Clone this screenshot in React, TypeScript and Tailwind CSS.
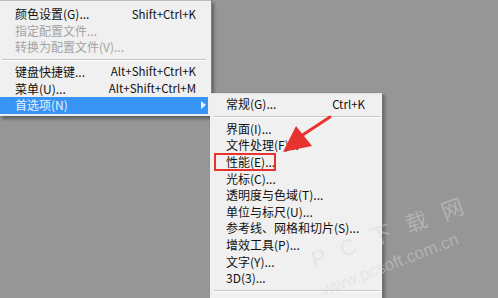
import React from 'react';

interface MenuItem {
  label: string;
  shortcut?: string;
  disabled?: boolean;
  active?: boolean;
  arrow?: boolean;
  sep?: boolean;
}

const font = { fontFamily: '"Noto Sans CJK SC", "Noto Sans", sans-serif' };

const mainItems: MenuItem[] = [
  { label: '颜色设置(G)...', shortcut: 'Shift+Ctrl+K' },
  { label: '指定配置文件...', disabled: true },
  { label: '转换为配置文件(V)...', disabled: true },
  { label: '', sep: true },
  { label: '键盘快捷键...', shortcut: 'Alt+Shift+Ctrl+K' },
  { label: '菜单(U)...', shortcut: 'Alt+Shift+Ctrl+M' },
  { label: '首选项(N)', active: true, arrow: true },
];

const subItems: MenuItem[] = [
  { label: '常规(G)...', shortcut: 'Ctrl+K' },
  { label: '', sep: true },
  { label: '界面(I)...' },
  { label: '文件处理(F)...' },
  { label: '性能(E)...' },
  { label: '光标(C)...' },
  { label: '透明度与色域(T)...' },
  { label: '单位与标尺(U)...' },
  { label: '参考线、网格和切片(S)...' },
  { label: '增效工具(P)...' },
  { label: '文字(Y)...' },
  { label: '3D(3)...' },
  { label: '', sep: true },
  { label: 'Camera Raw(M)...' },
];

const Row: React.FC<{ item: MenuItem; pl: string; pr: string }> = ({ item, pl, pr }) => {
  if (item.sep) {
    return (
      <div className="h-[8px] flex flex-col justify-center">
        <div className="h-px bg-[#c4c4c4] mx-[2px]" />
        <div className="h-px bg-white mx-[2px]" />
      </div>
    );
  }
  return (
    <div
      className={`h-[16.6px] flex items-center justify-between ${pl} ${pr} text-[12px] leading-none ${
        item.active ? 'bg-[#3794f5] text-[#e8f2ff]' : item.disabled ? 'text-[#a3a3a3]' : 'text-[#111]'
      }`}
    >
      <span>{item.label}</span>
      {item.shortcut && <span className="text-[11.5px]">{item.shortcut}</span>}
      {item.arrow && (
        <svg width="5" height="8" viewBox="0 0 5 8" className="mr-[-10px]">
          <path d="M0 0 L5 4 L0 8 Z" fill="#e8f2ff" />
        </svg>
      )}
    </div>
  );
};

const App: React.FC = () => {
  return (
    <div className="relative w-[498px] h-[298px] overflow-hidden bg-[#969696]" style={font}>
      {/* main menu */}
      <div className="absolute left-0 top-0 w-[212px] bg-[#f0f0f0] border-r border-[#7d7d7d] border-b border-b-[#e8e8e8] shadow-[2px_3px_3px_rgba(0,0,0,0.35)]">
        <div className="h-[1px] bg-[#bdbdbd]" />
        <div className="pt-[5px] pb-[1px] pr-[3px]">
          {mainItems.map((item, i) => (
            <Row key={i} item={item} pl="pl-[15px]" pr="pr-[12px]" />
          ))}
        </div>
      </div>

      {/* submenu */}
      <div className="absolute left-[210px] top-[93px] w-[173px] h-[220px] bg-[#f0f0f0] border-t border-[#e0e0e0] border-r border-r-[#6f6f6f] shadow-[2px_2px_3px_rgba(0,0,0,0.3)]">
        <div className="pt-[2px] pl-[2px]">
          {subItems.map((item, i) => (
            <Row key={i} item={item} pl="pl-[14px]" pr="pr-[17px]" />
          ))}
        </div>
      </div>

      {/* red highlight box */}
      <div className="absolute left-[214px] top-[153px] w-[62px] h-[18px] border-2 border-[#e8322f]" />

      {/* red arrow */}
      <svg className="absolute left-0 top-0 pointer-events-none" width="498" height="298" viewBox="0 0 498 298">
        <path d="M330 117 L298 138" stroke="#e8322f" strokeWidth="3" strokeLinecap="round" />
        <path d="M296 126 L283 152 L312 146 Z" fill="#e8322f" />
      </svg>

      {/* watermark */}
      <div
        className="absolute left-[312px] top-[250px] origin-left -rotate-[20deg] text-[22px] leading-none tracking-[5px] text-[#d8d8d8]/45 whitespace-nowrap pointer-events-none"
        style={{ fontFamily: '"Liberation Sans", "Noto Sans CJK SC", sans-serif' }}
      >
        P C 下 载 网
      </div>
      <div
        className="absolute left-[322px] top-[282px] origin-left -rotate-[21deg] text-[17px] leading-none text-[#d8d8d8]/45 whitespace-nowrap pointer-events-none"
        style={{ fontFamily: '"Liberation Sans", sans-serif' }}
      >
        www.pcsoft.com.cn
      </div>
    </div>
  );
};

export default App;
